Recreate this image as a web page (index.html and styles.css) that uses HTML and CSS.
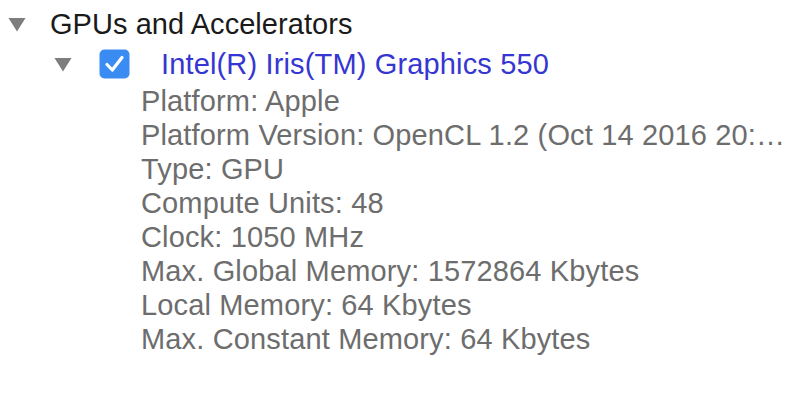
FILE: index.html
```html
<!DOCTYPE html>
<html>
<head>
<meta charset="utf-8">
<link rel="stylesheet" href="styles.css">
</head>
<body>
<div class="tree">
  <div class="row header">
    <span class="disclosure d1"><svg width="18" height="15" viewBox="0 0 18 15"><path d="M0.5 1 L17.5 1 L9 14.5 Z" fill="#7d7d7d"/></svg></span>
    <span class="label">GPUs and Accelerators</span>
  </div>
  <div class="row device">
    <span class="disclosure d2"><svg width="18" height="15" viewBox="0 0 18 15"><path d="M0.5 1 L17.5 1 L9 14.5 Z" fill="#7d7d7d"/></svg></span>
    <span class="check"><svg width="31" height="30" viewBox="0 0 31 30"><rect x="0.5" y="0.5" width="30" height="29" rx="5" fill="#3a8cf2"/><path d="M8 15.5 L13.3 21 L23 8.5" fill="none" stroke="#fff" stroke-width="3.2" stroke-linecap="round" stroke-linejoin="round"/></svg></span>
    <span class="name">Intel(R) Iris(TM) Graphics 550</span>
  </div>
  <ul class="props">
    <li>Platform: Apple</li>
    <li>Platform Version: OpenCL 1.2 (Oct 14 2016 20:…</li>
    <li>Type: GPU</li>
    <li>Compute Units: 48</li>
    <li>Clock: 1050 MHz</li>
    <li>Max. Global Memory: 1572864 Kbytes</li>
    <li>Local Memory: 64 Kbytes</li>
    <li>Max. Constant Memory: 64 Kbytes</li>
  </ul>
</div>
</body>
</html>
```

FILE: styles.css
```css
html, body {
  margin: 0;
  padding: 0;
  background: #ffffff;
}
body {
  font-family: "Liberation Sans", Arial, Helvetica, sans-serif;
  font-size: 29px;
  -webkit-font-smoothing: antialiased;
}
.tree {
  padding-top: 4px;
}
.row {
  display: flex;
  align-items: center;
  white-space: nowrap;
}
.header {
  height: 41px;
  color: #1a1a1a;
}
.device {
  height: 38px;
}
.disclosure {
  display: flex;
  width: 18px;
  height: 15px;
}
.d1 {
  margin-left: 8px;
  margin-right: 24px;
}
.label {
  letter-spacing: 0.05px;
}
.d2 {
  margin-left: 54px;
  margin-right: 27px;
}
.check {
  display: flex;
  width: 31px;
  height: 30px;
  margin-right: 31px;
}
.name {
  color: #3636d2;
  letter-spacing: 0.15px;
}
.props {
  list-style: none;
  margin: 0;
  padding: 1px 0 0 141px;
  color: #6d6d6d;
  line-height: 34px;
}
.props li {
  white-space: nowrap;
  letter-spacing: 0.15px;
}
```
